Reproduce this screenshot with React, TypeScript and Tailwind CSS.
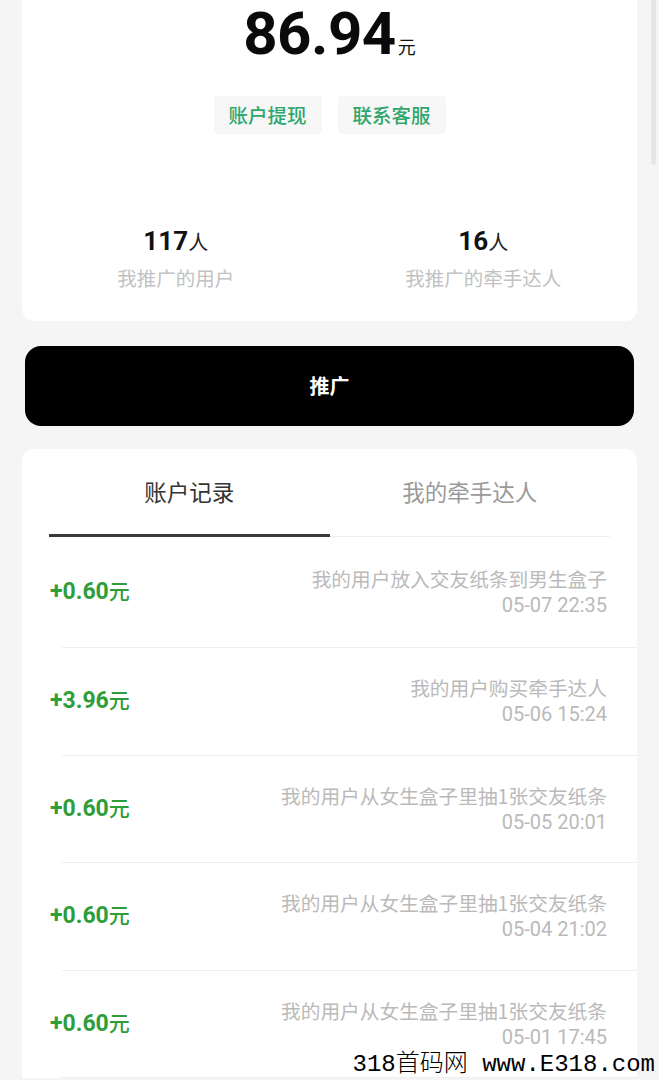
const cjk = "font-['Roboto','Noto_Sans_CJK_SC',sans-serif]";

const records = [
  { amount: "+0.60", text: "我的用户放入交友纸条到男生盒子", time: "05-07 22:35" },
  { amount: "+3.96", text: "我的用户购买牵手达人", time: "05-06 15:24" },
  { amount: "+0.60", text: "我的用户从女生盒子里抽1张交友纸条", time: "05-05 20:01" },
  { amount: "+0.60", text: "我的用户从女生盒子里抽1张交友纸条", time: "05-04 21:02" },
  { amount: "+0.60", text: "我的用户从女生盒子里抽1张交友纸条", time: "05-01 17:45" },
];

function Stat({ value, label }: { value: string; label: string }) {
  return (
    <div className="flex flex-col items-center">
      <div className="flex items-baseline leading-none">
        <span className="font-['Roboto',sans-serif] text-[26px] font-bold text-[#111]">{value}</span>
        <span className="font-['Noto_Sans_CJK_SC',sans-serif] text-[20px] text-[#222]">人</span>
      </div>
      <div className="mt-[10px] font-['Noto_Sans_CJK_SC',sans-serif] text-[19.5px] leading-[28px] text-[#c2c2c2]">
        {label}
      </div>
    </div>
  );
}

export default function App() {
  return (
    <div className={`relative h-[1080px] overflow-hidden bg-[#f5f5f5] ${cjk}`}>
      {/* scrollbar thumb */}
      <div className="absolute right-[3px] top-0 h-[165px] w-[5px] rounded-b bg-[#e6e6e6]" />

      <div className="mx-[22px] rounded-b-[12px] bg-white pt-[6px] pb-[29px]">
        <div className="flex h-[58px] items-end justify-center leading-none">
          <div className="flex items-baseline">
            <span className="font-['Roboto',sans-serif] text-[60px] font-bold tracking-[-0.5px] text-[#0a0a0a]">86.94</span>
            <span className="ml-[2px] font-['Noto_Sans_CJK_SC',sans-serif] text-[18px] text-[#111]">元</span>
          </div>
        </div>

        <div className="mt-[32px] flex justify-center gap-4">
          {["账户提现", "联系客服"].map((t) => (
            <div
              key={t}
              className="flex h-[38px] w-[108px] items-center justify-center rounded-[4px] bg-[#f7f7f7] font-['Noto_Sans_CJK_SC',sans-serif] text-[19.5px] font-medium text-[#2fa66b]"
            >
              {t}
            </div>
          ))}
        </div>

        <div className="mt-[94px] grid grid-cols-2">
          <Stat value="117" label="我推广的用户" />
          <Stat value="16" label="我推广的牵手达人" />
        </div>
      </div>

      <div className="mx-[25px] mt-[25px] flex h-[80px] items-center justify-center rounded-[16px] bg-black font-['Noto_Sans_CJK_SC',sans-serif] text-[20px] font-bold text-white">
        推广
      </div>

      <div className="mx-[22px] mt-[23px] rounded-t-[12px] bg-white">
        <div className="mx-[27px] grid grid-cols-2 border-b border-[#eeeeee]">
          <div className="flex flex-col items-center">
            <div className="pt-[26px] pb-[26px] font-['Noto_Sans_CJK_SC',sans-serif] text-[22.5px] leading-[33px] text-[#333]">
              账户记录
            </div>
            <div className="-mb-px h-[3px] w-full bg-[#3a3a3a]" />
          </div>
          <div className="flex flex-col items-center">
            <div className="pt-[26px] pb-[26px] font-['Noto_Sans_CJK_SC',sans-serif] text-[22.5px] leading-[33px] text-[#9a9a9a]">
              我的牵手达人
            </div>
          </div>
        </div>

        {records.map((r, i) => (
          <div key={i}>
            <div
              className={`flex items-center justify-between pl-[28px] pr-[30px] ${
                i === 0 ? "h-[110px]" : "h-[106.5px]"
              }`}
            >
              <div className="flex items-baseline text-[#2f9e3a]">
                <span className="font-['Roboto',sans-serif] text-[23px] font-bold">{r.amount}</span>
                <span className="font-['Noto_Sans_CJK_SC',sans-serif] text-[21px] font-medium">元</span>
              </div>
              <div className="flex flex-col items-end text-[20px] leading-[27px] text-[#bababa]">
                <span className="font-['Noto_Sans_CJK_SC',sans-serif] text-[19.7px]">{r.text}</span>
                <span className="font-['Roboto',sans-serif]">{r.time}</span>
              </div>
            </div>
            <div className="ml-[40px] h-px bg-[#eeeeee]" />
          </div>
        ))}
      </div>

      <div className="absolute right-[4px] bottom-[3px] flex items-baseline text-[24px] leading-none text-black">
        <span className="font-['Liberation_Mono',monospace]">318</span>
        <span className="font-['Noto_Sans_CJK_SC',sans-serif] font-light">首码网</span>
        <span className="font-['Liberation_Mono',monospace]">&nbsp;www.E318.com</span>
      </div>
    </div>
  );
}
